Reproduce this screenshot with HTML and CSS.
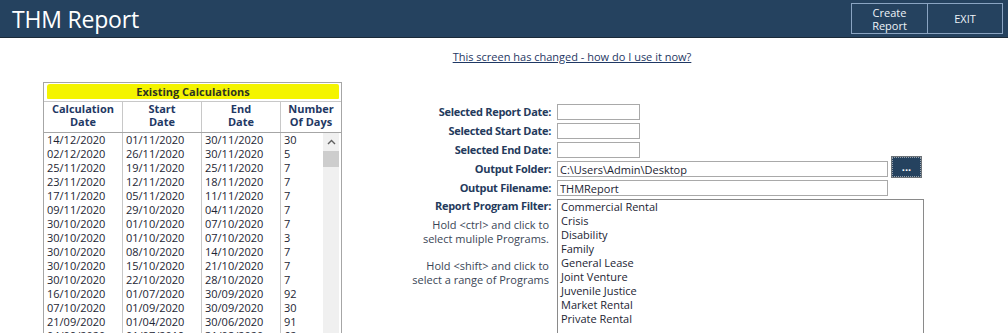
FILE: index.html
```html
<!DOCTYPE html>
<html lang="en">
<head>
  <meta charset="UTF-8" />
  <title>THM Report</title>
  <link rel="stylesheet" href="styles.css">
</head>
<body>

  <header class="topbar">
    <h1>THM Report</h1>
    <div class="actions">
      <button class="bar-btn">Create<br>Report</button>
      <button class="bar-btn">EXIT</button>
    </div>
  </header>

  <div class="help">
    <a href="#">This screen has changed - how do I use it now?</a>
  </div>

  <main class="content">
    <section class="calcs">
      <div class="calcs-title"><span>Existing Calculations</span></div>
      <div class="calcs-head">
        <div>Calculation<br>Date</div>
        <div>Start<br>Date</div>
        <div>End<br>Date</div>
        <div>Number<br>Of Days</div>
      </div>
      <div class="calcs-body">
        <div class="rows" id="rows"></div>
        <div class="vscroll">
          <div class="vscroll-up">
            <svg width="9" height="6" viewBox="0 0 9 6"><path d="M1 5 L4.5 1.5 L8 5" fill="none" stroke="#606060" stroke-width="1.4"/></svg>
          </div>
          <div class="vscroll-thumb"></div>
        </div>
      </div>
    </section>

    <form class="params">
      <label>Selected Report Date:</label>
      <input class="field date" type="text">

      <label>Selected Start Date:</label>
      <input class="field date" type="text">

      <label>Selected End Date:</label>
      <input class="field date" type="text">

      <label>Output Folder:</label>
      <div class="with-btn">
        <input class="field wide" type="text" value="C:\Users\Admin\Desktop">
        <button type="button" class="browse">...</button>
      </div>

      <label>Output Filename:</label>
      <input class="field wide" type="text" value="THMReport">

      <div class="filter-label">
        <label>Report Program Filter:</label>
        <p class="hint">Hold &lt;ctrl&gt; and click to<br>select muliple Programs.</p>
        <p class="hint">Hold &lt;shift&gt; and click to<br>select a range of Programs</p>
      </div>
      <ul class="programs">
        <li>Commercial Rental</li>
        <li>Crisis</li>
        <li>Disability</li>
        <li>Family</li>
        <li>General Lease</li>
        <li>Joint Venture</li>
        <li>Juvenile Justice</li>
        <li>Market Rental</li>
        <li>Private Rental</li>
      </ul>
    </form>
  </main>

  <script>
    const calcs = [
      ["14/12/2020", "01/11/2020", "30/11/2020", "30"],
      ["02/12/2020", "26/11/2020", "30/11/2020", "5"],
      ["25/11/2020", "19/11/2020", "25/11/2020", "7"],
      ["23/11/2020", "12/11/2020", "18/11/2020", "7"],
      ["17/11/2020", "05/11/2020", "11/11/2020", "7"],
      ["09/11/2020", "29/10/2020", "04/11/2020", "7"],
      ["30/10/2020", "01/10/2020", "07/10/2020", "7"],
      ["30/10/2020", "01/10/2020", "07/10/2020", "3"],
      ["30/10/2020", "08/10/2020", "14/10/2020", "7"],
      ["30/10/2020", "15/10/2020", "21/10/2020", "7"],
      ["30/10/2020", "22/10/2020", "28/10/2020", "7"],
      ["16/10/2020", "01/07/2020", "30/09/2020", "92"],
      ["07/10/2020", "01/09/2020", "30/09/2020", "30"],
      ["21/09/2020", "01/04/2020", "30/06/2020", "91"],
      ["04/09/2020", "01/07/2019", "31/08/2020", "62"]
    ];
    const rows = document.getElementById("rows");
    calcs.forEach(r => {
      r.forEach(v => {
        const cell = document.createElement("div");
        cell.textContent = v;
        rows.appendChild(cell);
      });
    });
  </script>
</body>
</html>
```

FILE: styles.css
```css
html, body {
  margin: 0;
  padding: 0;
  background: #fff;
  font-family: "Open Sans", "Noto Sans", sans-serif;
  font-size: 11px;
  color: #1c2533;
  height: 100vh;
  overflow: hidden;
}

.topbar {
  height: 37px;
  background: #25425f;
  border-bottom: 1px solid #1b2a38;
  display: flex;
  align-items: center;
  justify-content: space-between;
  padding: 0 5px 0 12px;
}

.topbar h1 {
  margin: 0;
  font-size: 23px;
  font-weight: 400;
  color: #fff;
  letter-spacing: -0.2px;
}

.actions {
  display: flex;
  border: 1px solid #8aa4c2;
  height: 29px;
}

.bar-btn {
  width: 75px;
  background: transparent;
  border: none;
  color: #eef3f8;
  font-family: inherit;
  font-size: 11px;
  line-height: 13px;
  padding: 0;
}

.bar-btn + .bar-btn {
  border-left: 1px solid #8aa4c2;
}

.help {
  display: flex;
  justify-content: center;
  padding: 12px 0 0 136px;
  height: 44px;
  box-sizing: border-box;
  line-height: 14px;
}

.help a {
  color: #1f3864;
}

.content {
  display: flex;
  align-items: flex-start;
  padding-left: 43px;
}

/* existing calculations list */
.calcs {
  width: 299px;
  border: 1px solid #a6a6a6;
  border-bottom: none;
  box-sizing: border-box;
}

.calcs-title {
  height: 17px;
  border-bottom: 1px solid #c8c8c8;
  padding: 0 2px 0 3px;
}

.calcs-title span {
  display: block;
  height: 15px;
  margin-top: 1px;
  background: #f4f400;
  border-radius: 3px 2px 1px 1px;
  text-align: center;
  font-weight: 700;
  line-height: 15px;
  color: #2e3320;
}

.calcs-head {
  display: grid;
  grid-template-columns: 78px 79px 79px 1fr;
  border-bottom: 1px solid #a6a6a6;
  height: 31px;
  box-sizing: border-box;
}

.calcs-head div {
  text-align: center;
  font-weight: 700;
  color: #1f3864;
  line-height: 13px;
  padding-top: 0;
}

.calcs-head div + div,
.rows div:not(:nth-child(4n+1)) {
  border-left: 1px solid #c8c8c8;
}

.calcs-body {
  display: flex;
  height: 210px;
}

.rows {
  display: grid;
  grid-template-columns: 78px 79px 79px 43px;
  grid-auto-rows: 14px;
  align-content: start;
  padding-top: 0;
  width: 279px;
  line-height: 14px;
}

.rows div {
  padding-left: 3px;
}

.vscroll {
  width: 16px;
  background: #f0f0f0;
  margin-right: 2px;
}

.vscroll-up {
  height: 18px;
  display: flex;
  align-items: center;
  justify-content: center;
}

.vscroll-thumb {
  height: 16px;
  background: #cdcdcd;
}

/* report parameters */
.params {
  display: grid;
  grid-template-columns: 209px auto;
  column-gap: 6px;
  row-gap: 3px;
  margin-top: 22px;
  align-items: center;
}

.params label {
  text-align: right;
  font-weight: 700;
  color: #243a5c;
  line-height: 14px;
  letter-spacing: -0.3px;
}

.field {
  height: 16px;
  box-sizing: border-box;
  border: 1px solid #a9a9a9;
  padding: 0 2px;
  font-family: inherit;
  font-size: 11px;
  color: #1c2533;
  margin: 0;
}

.date {
  width: 83px;
}

.wide {
  width: 331px;
}

.with-btn {
  display: flex;
  align-items: flex-end;
  gap: 4px;
  height: 16px;
}

.browse {
  width: 29px;
  height: 20px;
  background: #25425f;
  border: 1px dotted #9aa4ae;
  color: #fff;
  font-family: inherit;
  font-size: 11px;
  font-weight: 700;
  line-height: 10px;
  padding: 0;
  outline: 1px solid #6d7378;
}

.filter-label {
  align-self: start;
  display: flex;
  flex-direction: column;
  text-align: right;
}

.hint {
  margin: 5px 2px 0 0;
  line-height: 14px;
  color: #3a4656;
  text-align: right;
}

.hint + .hint {
  margin-top: 13px;
}

.programs {
  list-style: none;
  margin: 0;
  padding: 0 0 0 3px;
  width: 367px;
  height: 150px;
  box-sizing: border-box;
  border: 1px solid #8a8a8a;
  line-height: 14px;
  color: #1c2533;
}
```
